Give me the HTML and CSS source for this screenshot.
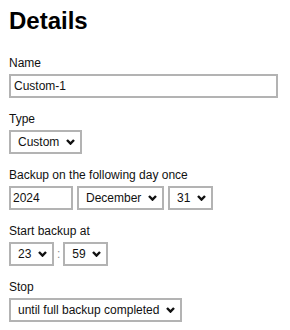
FILE: index.html
```html
<!DOCTYPE html>
<html lang="en">
<head>
<meta charset="utf-8">
<title>Details</title>
<link rel="stylesheet" href="styles.css">
</head>
<body>
<main class="panel">
  <h1 class="title">Details</h1>

  <div class="field">
    <label class="label" for="name">Name</label>
    <input class="text-input name-input" id="name" type="text" value="Custom-1">
  </div>

  <div class="field">
    <label class="label" for="type">Type</label>
    <div class="row">
      <select class="select" id="type"><option>Custom</option></select>
    </div>
  </div>

  <div class="field">
    <label class="label" for="year">Backup on the following day once</label>
    <div class="row">
      <input class="text-input year-input" id="year" type="text" value="2024">
      <select class="select"><option>December</option></select>
      <select class="select"><option>31</option></select>
    </div>
  </div>

  <div class="field">
    <label class="label" for="hour">Start backup at</label>
    <div class="row time-row">
      <select class="select" id="hour"><option>23</option></select>
      <span class="colon">:</span>
      <select class="select"><option>59</option></select>
    </div>
  </div>

  <div class="field">
    <label class="label" for="stop">Stop</label>
    <div class="row">
      <select class="select" id="stop"><option>until full backup completed</option></select>
    </div>
  </div>
</main>
</body>
</html>
```
FILE: styles.css
```css
html, body {
  margin: 0;
  padding: 0;
  background: #ffffff;
}

body {
  font-family: "Liberation Sans", Arial, sans-serif;
  font-size: 12px;
  color: #111;
}

.panel {
  padding: 7px 12px 0 9px;
}

.title {
  margin: 0 0 21px;
  font-size: 24px;
  line-height: 28px;
  font-weight: bold;
  color: #000;
}

.field {
  margin-bottom: 14px;
}

.label {
  display: block;
  font-size: 12px;
  line-height: 14px;
  margin-bottom: 4px;
  color: #111;
}

.row {
  display: flex;
  align-items: center;
  gap: 4px;
}

.time-row {
  gap: 3px;
}

.colon {
  color: #8c8c8c;
  font-size: 12px;
  line-height: 14px;
}

.text-input {
  box-sizing: border-box;
  height: 24px;
  margin: 0;
  padding: 0 3px;
  border: 2px solid #b3b3b3;
  border-radius: 0;
  font-family: "Liberation Sans", Arial, sans-serif;
  font-size: 12px;
  color: #111;
  background: #fff;
  outline: none;
}

.name-input {
  display: block;
  width: 100%;
}

.year-input {
  width: 64px;
  padding-left: 2px;
}

.select {
  box-sizing: border-box;
  -webkit-appearance: none;
  appearance: none;
  height: 24px;
  margin: 0;
  padding: 0 20px 0 7px;
  border: 2px solid #b3b3b3;
  border-radius: 0;
  font-family: "Liberation Sans", Arial, sans-serif;
  font-size: 12px;
  color: #111;
  background-color: #fff;
  background-image: url("data:image/svg+xml,%3Csvg xmlns='http://www.w3.org/2000/svg' width='9' height='6' viewBox='0 0 9 6'%3E%3Cpath d='M1 1 L4.5 4.6 L8 1' fill='none' stroke='%23111' stroke-width='2.4'/%3E%3C/svg%3E");
  background-repeat: no-repeat;
  background-position: right 5px center;
  background-size: 9px 6px;
  outline: none;
}
```
